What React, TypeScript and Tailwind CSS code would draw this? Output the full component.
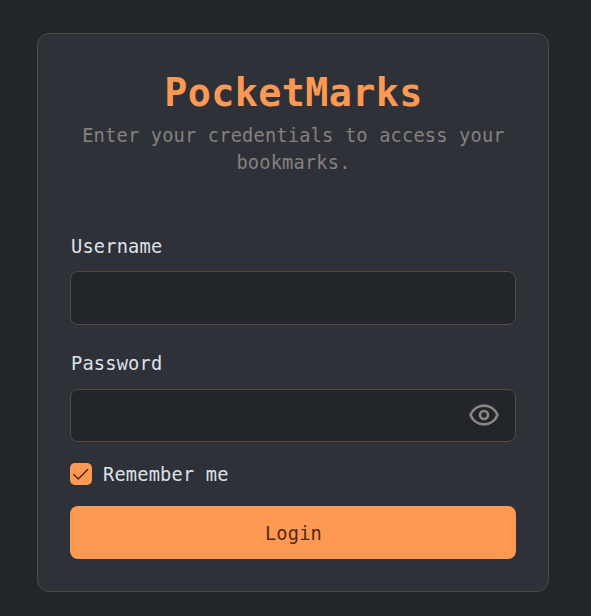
import { useState } from "react";

const inputClass =
  "block w-full rounded-lg border border-[#574a42] bg-[#222529] px-4 text-[#e0e4ee] outline-none";

function EyeIcon() {
  return (
    <svg viewBox="0 0 24 24" className="size-8" fill="none" stroke="#8b8783" strokeWidth="2" strokeLinecap="round" strokeLinejoin="round">
      <path d="M2.06 12.35a1 1 0 0 1 0-.7 10.75 10.75 0 0 1 19.88 0 1 1 0 0 1 0 .7 10.75 10.75 0 0 1-19.88 0" />
      <circle cx="12" cy="12" r="3" />
    </svg>
  );
}

export default function App() {
  const [remember, setRemember] = useState(true);
  return (
    <main className="h-[616px] w-[591px] bg-[#222529] pt-[33px] pl-[37px] font-['DejaVu_Sans_Mono',monospace] text-[18.7px] tracking-[0.17px] text-[#dde1ea]">
      <form className="flex h-[559px] w-[512px] flex-col rounded-xl border border-[#524a46] bg-[#2f3138] px-8" onSubmit={(e) => e.preventDefault()}>
        <header className="pt-9 text-center">
          <h1 className="pl-px text-[38.4px] leading-[46px] font-bold tracking-[0.37px] text-[#fd9952]">PocketMarks</h1>
          <p className="mt-[6px] pl-px leading-[27px] text-[#85817d]">
            Enter your credentials to access your bookmarks.
          </p>
        </header>
        <label htmlFor="username" className="mt-[57px] pl-px leading-[27px]">Username</label>
        <div className="mt-[11px]">
          <input id="username" className={`${inputClass} h-[54px]`} />
        </div>
        <label htmlFor="password" className="mt-[25px] pl-px leading-[27px]">Password</label>
        <div className="relative mt-3">
          <input id="password" type="password" className={`${inputClass} h-[53px]`} />
          <button type="button" aria-label="Show password" className="absolute top-[10px] right-4">
            <EyeIcon />
          </button>
        </div>
        <label className="mt-[18px] flex items-center gap-[11px] leading-[27px]">
          <input type="checkbox" className="sr-only" checked={remember} onChange={(e) => setRemember(e.target.checked)} />
          <span className="flex size-[22px] items-center justify-center rounded-[5px] bg-[#fd9952]">
            {remember && (
              <svg viewBox="0 0 22 22" className="size-[22px]" fill="none" stroke="#532712" strokeWidth="1.5" strokeLinecap="round" strokeLinejoin="round">
                <path d="M3.8 11.5 8.3 16 17.6 6.5" />
              </svg>
            )}
          </span>
          <span className="pt-[2px] leading-[25px]">Remember me</span>
        </label>
        <button className="mt-[19px] h-[53px] w-full rounded-lg bg-[#fd9952] pt-[3px] pl-px text-[#562810]">Login</button>
      </form>
    </main>
  );
}
